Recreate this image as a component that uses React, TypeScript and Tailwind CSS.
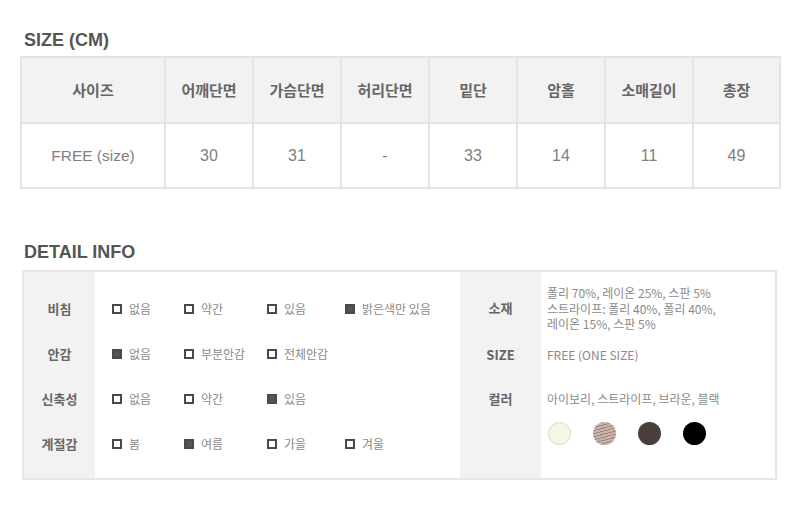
import React from "react";

const font = { fontFamily: '"Noto Sans CJK KR", "Noto Sans", sans-serif' };
const latin = { fontFamily: '"Liberation Sans", "Noto Sans CJK KR", sans-serif' };

const sizeHeaders = ["사이즈", "어깨단면", "가슴단면", "허리단면", "밑단", "암홀", "소매길이", "총장"];
const sizeValues = ["FREE (size)", "30", "31", "-", "33", "14", "11", "49"];

type Opt = { label: string; on?: boolean };

const detailRows: { title: string; options: Opt[] }[] = [
    {
        title: "비침",
        options: [{ label: "없음" }, { label: "약간" }, { label: "있음" }, { label: "밝은색만 있음", on: true }],
    },
    {
        title: "안감",
        options: [{ label: "없음", on: true }, { label: "부분안감" }, { label: "전체안감" }],
    },
    {
        title: "신축성",
        options: [{ label: "없음" }, { label: "약간" }, { label: "있음", on: true }],
    },
    {
        title: "계절감",
        options: [{ label: "봄" }, { label: "여름", on: true }, { label: "가을" }, { label: "겨울" }],
    },
];

const Check: React.FC<Opt> = ({ label, on }) => (
    <div className="flex items-center gap-[7px]">
        <span
            className={
                "w-[10px] h-[10px] border-[2px] border-[#4a4a4a] " + (on ? "bg-[#555]" : "bg-white")
            }
        />
        <span className="text-[12px] text-[#8a8a8a]">{label}</span>
    </div>
);

export default function App() {
    return (
        <div className="w-[800px] h-[530px] bg-white pt-[29px] pl-[20px]" style={font}>
            {/* SIZE table */}
            <h2 className="pl-[4px] text-[18px] leading-[22px] font-bold text-[#555]" style={latin}>
                SIZE (CM)
            </h2>
            <div className="mt-[5px] w-[761px] border-[2px] border-[#e4e4e4] grid grid-cols-[142px_repeat(6,88px)_1fr]">
                {sizeHeaders.map((h, i) => (
                    <div
                        key={h}
                        className={
                            "h-[66px] bg-[#f2f2f2] border-b-[2px] border-[#e4e4e4] flex items-center justify-center text-[15px] font-bold text-[#666] " +
                            (i > 0 ? "border-l-[2px]" : "")
                        }
                    >
                        {h}
                    </div>
                ))}
                {sizeValues.map((v, i) => (
                    <div
                        key={i}
                        style={latin}
                        className={
                            "h-[63px] pt-[1px] flex items-center justify-center text-[#808080] border-[#e4e4e4] " +
                            (i === 0 ? "text-[15.5px]" : "text-[16px] border-l-[2px]")
                        }
                    >
                        {v}
                    </div>
                ))}
            </div>

            {/* DETAIL INFO */}
            <h2 className="mt-[52px] pl-[4px] text-[18px] leading-[22px] font-bold text-[#555]" style={latin}>
                DETAIL INFO
            </h2>
            <div className="mt-[7px] ml-[2px] w-[755px] h-[210px] border-[2px] border-[#e6e6e6] flex">
                <div className="w-[71px] bg-[#f2f2f2] flex flex-col justify-center gap-[25px] pt-[2px]">
                    {detailRows.map((r) => (
                        <div key={r.title} className="h-[20px] flex items-center justify-center text-[13px] font-bold text-[#666]">
                            {r.title}
                        </div>
                    ))}
                </div>
                <div className="w-[365px] pl-[17px] flex flex-col justify-center gap-[25px] pt-[2px]">
                    {detailRows.map((r) => (
                        <div key={r.title} className="h-[20px] grid grid-cols-[72px_83px_78px_auto] items-center">
                            {r.options.map((o) => (
                                <Check key={o.label} {...o} />
                            ))}
                        </div>
                    ))}
                </div>
                <div className="w-[81px] bg-[#f2f2f2] flex flex-col text-[13px] font-bold text-[#666]">
                    <div className="h-[72px] flex items-center justify-center">소재</div>
                    <div className="h-[22px] flex items-center justify-center">SIZE</div>
                    <div className="mt-[23px] h-[20px] flex items-center justify-center">컬러</div>
                </div>
                <div className="flex-1 pl-[6px] flex flex-col text-[12px] text-[#8a8a8a]">
                    <div className="h-[72px] flex flex-col justify-center leading-[15.5px] pt-[1px]">
                        <span>폴리 70%, 레이온 25%, 스판 5%</span>
                        <span>스트라이프: 폴리 40%, 폴리 40%,</span>
                        <span>레이온 15%, 스판 5%</span>
                    </div>
                    <div className="h-[22px] flex items-center">FREE (ONE SIZE)</div>
                    <div className="mt-[23px] h-[20px] flex items-center">아이보리, 스트라이프, 브라운, 블랙</div>
                    <div className="mt-[13px] flex items-center gap-[22px] pl-[1px]">
                        <span className="w-[23px] h-[23px] rounded-full bg-[#f7f6e6] border border-[#d8d8cc]" />
                        <span className="w-[23px] h-[23px] rounded-full bg-[repeating-linear-gradient(165deg,#c9b4ac_0px,#c9b4ac_2px,#a08881_2px,#a08881_3px)]" />
                        <span className="w-[23px] h-[23px] rounded-full bg-[#4a3f3d]" />
                        <span className="w-[23px] h-[23px] rounded-full bg-black" />
                    </div>
                </div>
            </div>
        </div>
    );
}
